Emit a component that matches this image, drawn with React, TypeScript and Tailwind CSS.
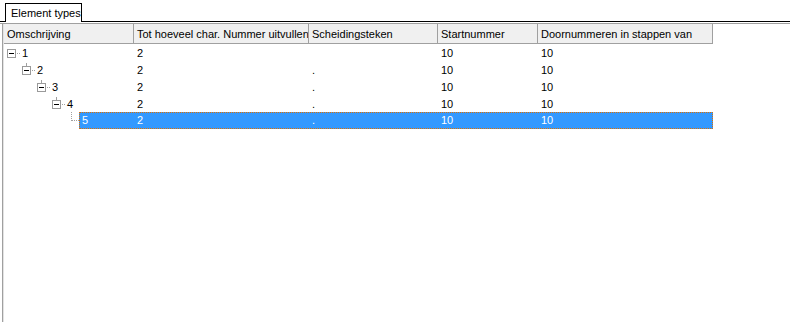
import React from 'react';

const cols = [
  { label: 'Omschrijving', w: 'w-[129px]' },
  { label: 'Tot hoeveel char. Nummer uitvullen', w: 'w-[175px]' },
  { label: 'Scheidingsteken', w: 'w-[129px]' },
  { label: 'Startnummer', w: 'w-[100px]' },
  { label: 'Doornummeren in stappen van', w: 'w-[176px]' },
];

const rows = [
  { level: 0, name: '1', sep: '' },
  { level: 1, name: '2', sep: '.' },
  { level: 2, name: '3', sep: '.' },
  { level: 3, name: '4', sep: '.' },
];

function MinusBox() {
  return (
    <span className="relative flex h-[9px] w-[9px] items-center justify-center border border-[#9a9a9a] bg-white">
      <span className="h-px w-[5px] bg-black" />
    </span>
  );
}

function Cells({ sep }: { sep: string }) {
  return (
    <>
      <span className="w-[175px] pl-[4px]">2</span>
      <span className="w-[129px] pl-[4px]">{sep}</span>
      <span className="w-[100px] pl-[4px]">10</span>
      <span className="flex-1 pl-[4px]">10</span>
    </>
  );
}

export default function App() {
  return (
    <div
      className="relative h-[322px] w-[790px] overflow-hidden bg-white text-[11px] text-black"
      style={{ fontFamily: '"Liberation Sans", Arial, sans-serif' }}
    >
      {/* tab strip */}
      <div className="flex h-[22px] items-end">
        <div className="w-[5px] border-b border-black" />
        <div className="flex h-[19px] w-[77px] items-center border-x border-t border-black bg-white pl-[5px] pt-px">
          Element types
        </div>
        <div className="flex-1 border-b border-black" />
      </div>

      <div className="mt-px flex h-[299px] border-t border-[#a0a0a0]">
        <div className="ml-[2px] w-px bg-[#a0a0a0]" />
        <div className="w-px bg-[#e3e3e3]" />
        <div className="flex-1">
          {/* header */}
          <div className="flex h-[20px] w-[709px] border-b border-r border-[#a0a0a0] bg-[#f0f0f0]">
            {cols.map((c, i) => (
              <div
                key={c.label}
                className={`${c.w} flex items-center whitespace-nowrap pt-[2px] pl-[3px] ${i === 0 ? '' : 'border-l border-[#a0a0a0]'} ${i === 4 ? 'flex-1' : ''}`}
              >
                {c.label}
              </div>
            ))}
          </div>

          {/* rows */}
          <div>
            {rows.map((r) => (
              <div key={r.name} className="flex h-[17px] w-[709px] items-center pt-px">
                <div className="flex w-[129px] items-center" style={{ paddingLeft: 3 + r.level * 15 }}>
                  <span className="relative">
                    <MinusBox />
                    {r.level > 0 && (
                      <span className="absolute left-[4px] top-[-3px] h-[2px] border-l border-dotted border-[#a0a0a0]" />
                    )}
                  </span>
                  <span className="ml-px w-[3px] border-t border-dotted border-[#a0a0a0]" />
                  <span className="ml-[2px]">{r.name}</span>
                </div>
                <Cells sep={r.sep} />
              </div>
            ))}

            {/* selected leaf row */}
            <div className="flex h-[17px] w-[709px] items-center">
              <div className="flex h-full w-[75px] items-start">
                <span className="ml-[67px] h-[9px] w-[8px] border-b border-l border-dotted border-[#a0a0a0]" />
              </div>
              <div className="flex h-[17px] flex-1 items-center border border-dotted border-[#e07000] bg-[#3399ff] text-white">
                <span className="w-[53px] pl-[2px]">5</span>
                <span className="w-[175px] pl-[4px]">2</span>
                <span className="w-[129px] pl-[4px]">.</span>
                <span className="w-[100px] pl-[4px]">10</span>
                <span className="flex-1 pl-[4px]">10</span>
              </div>
            </div>
          </div>
        </div>
      </div>
    </div>
  );
}
